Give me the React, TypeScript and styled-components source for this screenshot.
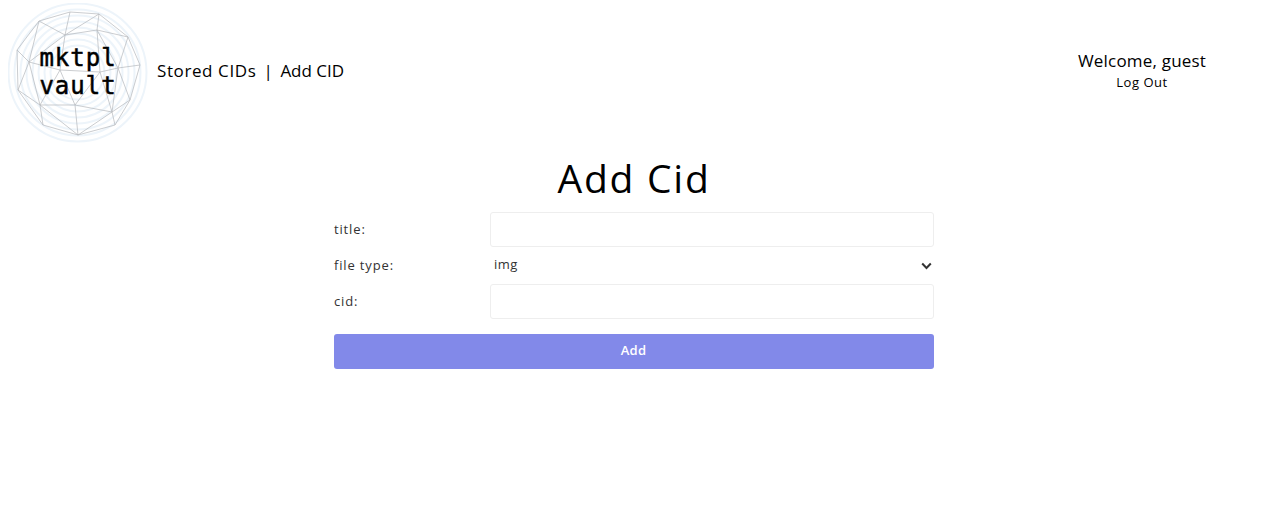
import React from "react";
import styled, { createGlobalStyle } from "styled-components";

const Global = createGlobalStyle`
  html, body { margin: 0; padding: 0; background: #fff; }
  body { font-family: "Noto Sans", "DejaVu Sans", sans-serif; color: #000; }
`;

const Header = styled.header`
  display: flex;
  align-items: center;
  height: 145px;
  padding-left: 8px;
`;
const LogoBox = styled.div`
  position: relative;
  width: 140px;
  height: 140px;
  flex: none;
  margin-top: 1px;
`;
const LogoText = styled.div`
  position: absolute;
  left: 27px;
  top: 41px;
  width: 86px;
  text-align: center;
  font-family: "DejaVu Sans Mono", monospace;
  font-weight: 400;
  font-size: 24px;
  line-height: 28px;
  letter-spacing: 1px;
  -webkit-text-stroke: 0.5px #000;
  color: #000;
`;
const Nav = styled.nav`
  display: flex;
  gap: 7px;
  margin-left: 9px;
  margin-top: -5px;
  font-family: "Open Sans", sans-serif;
  font-size: 17px;
  letter-spacing: 0.6px;
`;
const NavLink = styled.span<{ $narrow?: boolean }>`
  letter-spacing: ${(p) => (p.$narrow ? "0" : "0.6px")};
`;
const User = styled.div`
  margin-left: auto;
  margin-right: 40px;
  margin-top: -3px;
  width: 160px;
  text-align: center;
`;
const Welcome = styled.div`
  font-family: "Open Sans", sans-serif;
  font-size: 17px;
  line-height: 22px;
  letter-spacing: 0.2px;
`;
const LogOut = styled.div`
  font-family: "Open Sans", sans-serif;
  font-size: 13px;
  line-height: 20px;
  letter-spacing: 0.55px;
`;
const Main = styled.main`
  display: flex;
  flex-direction: column;
  align-items: center;
  padding-left: 6px;
`;
const Title = styled.h1`
  margin: 5px 0 2px;
  height: 60px;
  font-family: "Open Sans", sans-serif;
  font-weight: 500;
  font-size: 39px;
  line-height: 55px;
  letter-spacing: 1.75px;
`;
const Form = styled.form`
  width: 600px;
  display: flex;
  flex-direction: column;
  gap: 1px;
`;
const Row = styled.div`
  display: grid;
  grid-template-columns: 156px 444px;
  align-items: center;
  height: 35px;
`;
const Label = styled.label`
  font-family: "Open Sans", sans-serif;
  font-size: 13px;
  letter-spacing: 0.85px;
  color: #333;
  margin-top: -2px;
`;
const Input = styled.input`
  box-sizing: border-box;
  width: 444px;
  height: 35px;
  border: 1px solid #eeeeee;
  border-radius: 3px;
  background: #fff;
  outline: none;
`;
const SelectWrap = styled.div`
  position: relative;
  height: 35px;
`;
const Select = styled.select`
  appearance: none;
  box-sizing: border-box;
  width: 444px;
  height: 35px;
  padding: 0 0 3px 4px;
  border: none;
  background: transparent;
  font-family: "Open Sans", sans-serif;
  font-size: 13px;
  letter-spacing: 0.5px;
  color: #333;
  outline: none;
`;
const Chevron = styled.svg`
  position: absolute;
  right: 2px;
  top: 14px;
  width: 11px;
  height: 8px;
  pointer-events: none;
`;
const Button = styled.button`
  height: 35px;
  margin-top: 14px;
  border: none;
  border-radius: 3px;
  background: #8289e9;
  color: #fff;
  font-family: "Open Sans", sans-serif;
  font-size: 13px;
  font-weight: 600;
  letter-spacing: 0.3px;
  padding: 0 1px 4px 0;
`;

const rings = [69, 63, 57, 51, 45, 39, 33, 27];
const outer = "39,21 70,12 99,14 128,37 140,65 130,100 115,125 78,135 43,125 18,90 17,50";
const edges: [number, number, number, number][] = [
  [39,21,65,35],[70,12,65,35],[99,14,97,30],[128,37,97,30],[65,35,97,30],
  [39,21,29,62],[17,50,29,62],[65,35,29,62],[65,35,60,70],[29,62,60,70],
  [97,30,118,68],[128,37,118,68],[140,65,118,68],[97,30,100,72],[118,68,130,100],
  [29,62,18,90],[29,62,40,105],[18,90,40,105],[43,125,40,105],[60,70,40,105],
  [60,70,100,72],[118,68,100,72],[100,72,75,105],[40,105,75,105],[60,70,75,105],
  [75,105,78,135],[40,105,78,135],[75,105,112,112],[100,72,112,112],[118,68,112,112],
  [112,112,130,100],[112,112,115,125],[112,112,78,135],[99,14,65,35],
];

export default function App() {
  return (
    <>
      <Global />
      <Header>
        <LogoBox>
          <svg width="140" height="140" viewBox="0 0 140 140">
            {rings.map((r) => (
              <circle key={r} cx="69.5" cy="69.5" r={r} fill="none" stroke="#edf4fa" strokeWidth="2" />
            ))}
            <g transform="translate(-8 -3)" stroke="#b4b8bc" strokeWidth="0.7" fill="none">
              <polygon points={outer} />
              {edges.map(([a, b, c, d], i) => (
                <line key={i} x1={a} y1={b} x2={c} y2={d} />
              ))}
            </g>
          </svg>
          <LogoText>mktpl<br />vault</LogoText>
        </LogoBox>
        <Nav>
          <NavLink>Stored CIDs</NavLink>
          <NavLink>|</NavLink>
          <NavLink $narrow>Add CID</NavLink>
        </Nav>
        <User>
          <Welcome>Welcome, guest</Welcome>
          <LogOut>Log Out</LogOut>
        </User>
      </Header>
      <Main>
        <Title>Add Cid</Title>
        <Form>
          <Row>
            <Label>title:</Label>
            <Input />
          </Row>
          <Row>
            <Label>file type:</Label>
            <SelectWrap>
              <Select defaultValue="img">
                <option value="img">img</option>
              </Select>
              <Chevron viewBox="0 0 11 8">
                <path d="M1.2 1.5 L5.5 6 L9.8 1.5" fill="none" stroke="#333" strokeWidth="2" />
              </Chevron>
            </SelectWrap>
          </Row>
          <Row>
            <Label>cid:</Label>
            <Input />
          </Row>
          <Button type="button">Add</Button>
        </Form>
      </Main>
    </>
  );
}
